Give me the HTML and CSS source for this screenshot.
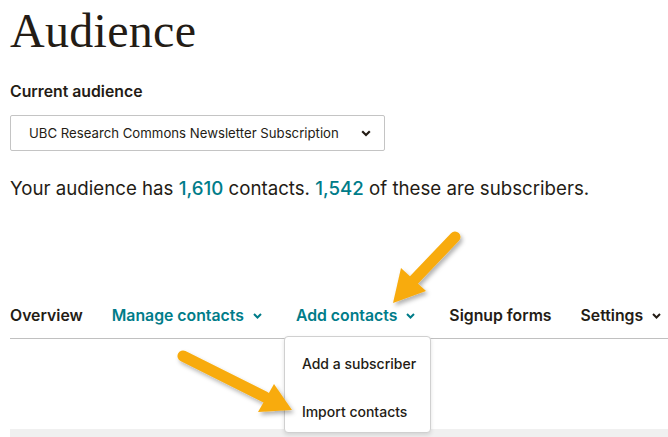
FILE: index.html
```html
<!DOCTYPE html>
<html>
<head>
<meta charset="utf-8">
<link rel="stylesheet" href="styles.css">
</head>
<body>
<div class="page">
  <h1 class="title">Audience</h1>
  <div class="label">Current audience</div>
  <div class="select">
    <span>UBC Research Commons Newsletter Subscription</span>
    <svg class="chev" width="10" height="7" viewBox="0 0 10 7"><path d="M1.2 1.2 L5 5 L8.8 1.2" fill="none" stroke="#241c15" stroke-width="2.2"/></svg>
  </div>
  <p class="summary">Your audience has <span class="num">1,610</span> contacts. <span class="num">1,542</span> of these are subscribers.</p>
  <nav class="tabs">
    <span class="tab">Overview</span>
    <span class="tab teal has-chev">Manage contacts <svg class="chev" width="9" height="6" viewBox="0 0 9 6"><path d="M1 1 L4.5 4.5 L8 1" fill="none" stroke="#007c89" stroke-width="2"/></svg></span>
    <span class="tab teal has-chev open">Add contacts <svg class="chev" width="9" height="6" viewBox="0 0 9 6"><path d="M1 1 L4.5 4.5 L8 1" fill="none" stroke="#007c89" stroke-width="2"/></svg>
      <div class="menu">
        <div class="item">Add a subscriber</div>
        <div class="item">Import contacts</div>
      </div>
    </span>
    <span class="tab">Signup forms</span>
    <span class="tab has-chev">Settings <svg class="chev" width="9" height="6" viewBox="0 0 9 6"><path d="M1 1 L4.5 4.5 L8 1" fill="none" stroke="#241c15" stroke-width="2"/></svg></span>
  </nav>
  <div class="content"></div>
  <div class="strip"></div>
</div>
<svg class="arrows" width="668" height="437" viewBox="0 0 668 437">
  <defs>
    <filter id="sh" x="-20%" y="-20%" width="140%" height="140%">
      <feDropShadow dx="2" dy="3" stdDeviation="2" flood-color="#000" flood-opacity="0.3"/>
    </filter>
  </defs>
  <g filter="url(#sh)" fill="#f8ab0c" stroke="#f8ab0c">
    <line x1="455" y1="237" x2="413" y2="281" stroke-width="11" stroke-linecap="round"/>
    <polygon points="393,303 401,268 426,291" stroke="none"/>
    <line x1="183" y1="356" x2="265" y2="397" stroke-width="11" stroke-linecap="round"/>
    <polygon points="292,410 258,412 274,384" stroke="none"/>
  </g>
</svg>
</body>
</html>
```
FILE: styles.css
```css
html, body { margin: 0; padding: 0; background: #fff; }
body { width: 668px; height: 437px; overflow: hidden; position: relative; font-family: Inter, "Liberation Sans", Arial, sans-serif; color: #241c15; }
.page { padding-left: 10px; }
.title { margin: 0; padding-top: 3px; font-family: "Liberation Serif", "Times New Roman", serif; font-weight: normal; font-size: 48px; line-height: 56px; letter-spacing: 0.3px; color: #241c15; }
.label { margin-top: 24px; font-size: 15.8px; font-weight: 600; line-height: 18px; }
.select { margin-top: 14px; border: 1px solid #c4c4c4; border-radius: 2px; display: flex; align-items: center; padding-left: 18px; box-sizing: border-box; width: 375px; height: 36px; font-size: 13.2px; gap: 22px; }
.select .chev { margin-top: 1px; }
.summary { margin: 26px 0 0; font-size: 18.7px; line-height: 24px; }
.num { color: #007c89; font-weight: 500; }
.tabs { margin-top: 103px; display: flex; gap: 29px; align-items: center; height: 23px; border-bottom: 1px solid #c0c0c0; padding-bottom: 11px; font-size: 15.8px; font-weight: 600; }
.tab { position: relative; display: flex; align-items: center; gap: 9px; white-space: nowrap; }
.tab.has-chev { margin-right: 5px; }
.tab.teal { color: #007c89; }
.tab .chev { margin-top: 1px; }
.menu { position: absolute; left: -12px; top: 30px; width: 147px; height: 97px; box-sizing: border-box; background: #fff; border: 1px solid #d0d0d0; border-radius: 4px; box-shadow: 0 2px 4px rgba(0,0,0,0.12); color: #241c15; z-index: 2; display: flex; flex-direction: column; font-weight: 500; }
.menu .item { flex: none; padding-left: 17px; height: 48px; display: flex; align-items: center; font-size: 14px; }
.menu .item:first-child { margin-top: 2px; }
.content { height: 90px; }
.strip { position: absolute; left: 10px; right: 0; top: 429px; height: 8px; background: #f0f0f0; }
.arrows { position: absolute; left: 0; top: 0; z-index: 5; pointer-events: none; }
```
